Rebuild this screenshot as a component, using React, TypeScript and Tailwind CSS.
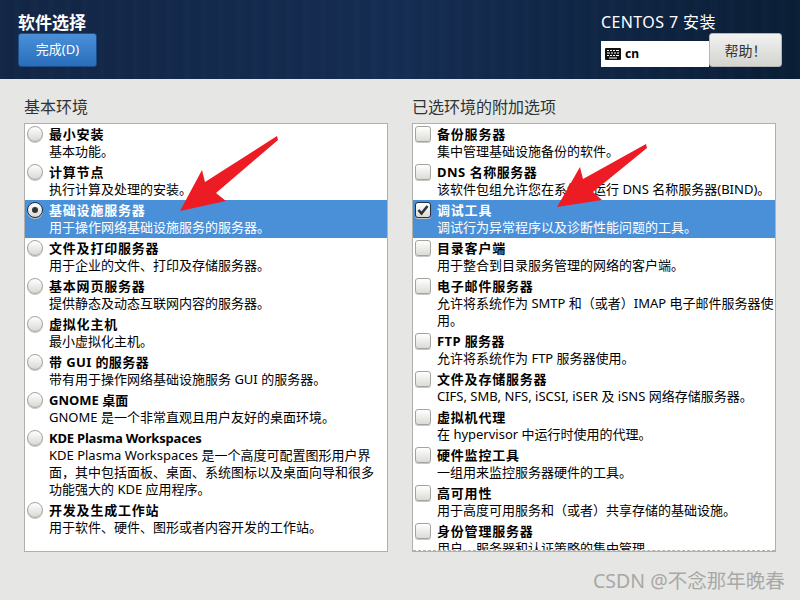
import React from 'react';

type Row = { title: string; desc: string; selected?: boolean; checked?: boolean; spacing?: string };

const envs: Row[] = [
  { title: '最小安装', desc: '基本功能。' },
  { title: '计算节点', desc: '执行计算及处理的安装。' },
  { title: '基础设施服务器', desc: '用于操作网络基础设施服务的服务器。', selected: true, checked: true },
  { title: '文件及打印服务器', desc: '用于企业的文件、打印及存储服务器。' },
  { title: '基本网页服务器', desc: '提供静态及动态互联网内容的服务器。' },
  { title: '虚拟化主机', desc: '最小虚拟化主机。' },
  { title: '带 GUI 的服务器', desc: '带有用于操作网络基础设施服务 GUI 的服务器。', spacing: 'tracking-[0.4px]' },
  { title: 'GNOME 桌面', desc: 'GNOME 是一个非常直观且用户友好的桌面环境。', spacing: 'tracking-normal' },
  {
    title: 'KDE Plasma Workspaces',
    desc: 'KDE Plasma Workspaces 是一个高度可配置图形用户界面，其中包括面板、桌面、系统图标以及桌面向导和很多功能强大的 KDE 应用程序。',
    spacing: 'tracking-[-0.2px]',
  },
  { title: '开发及生成工作站', desc: '用于软件、硬件、图形或者内容开发的工作站。' },
];

const addons: Row[] = [
  { title: '备份服务器', desc: '集中管理基础设施备份的软件。' },
  { title: 'DNS 名称服务器', desc: '该软件包组允许您在系统上运行 DNS 名称服务器(BIND)。', spacing: 'tracking-[0.5px]' },
  { title: '调试工具', desc: '调试行为异常程序以及诊断性能问题的工具。', selected: true, checked: true },
  { title: '目录客户端', desc: '用于整合到目录服务管理的网络的客户端。' },
  { title: '电子邮件服务器', desc: '允许将系统作为 SMTP 和（或者）IMAP 电子邮件服务器使用。' },
  { title: 'FTP 服务器', desc: '允许将系统作为 FTP 服务器使用。', spacing: 'tracking-[0.4px]' },
  { title: '文件及存储服务器', desc: 'CIFS, SMB, NFS, iSCSI, iSER 及 iSNS 网络存储服务器。' },
  { title: '虚拟机代理', desc: '在 hypervisor 中运行时使用的代理。' },
  { title: '硬件监控工具', desc: '一组用来监控服务器硬件的工具。' },
  { title: '高可用性', desc: '用于高度可用服务和（或者）共享存储的基础设施。' },
  { title: '身份管理服务器', desc: '用户、服务器和认证策略的集中管理。' },
];

function Radio({ checked }: { checked?: boolean }) {
  return (
    <span
      className={`w-[16px] h-[16px] rounded-full border bg-gradient-to-b from-[#ffffff] to-[#d8d8d4] flex items-center justify-center shrink-0 shadow-[0_1px_0_#c8c8c4] ${
        checked ? 'border-[#20303f]' : 'border-[#a3a39f]'
      }`}
    >
      {checked && <span className="w-[6px] h-[6px] rounded-full bg-[#2e3436]" />}
    </span>
  );
}

function Check({ checked }: { checked?: boolean }) {
  return (
    <span
      className={`w-[16px] h-[16px] rounded-[3px] border bg-gradient-to-b from-[#ffffff] to-[#dbdbd7] flex items-center justify-center shrink-0 shadow-[0_1px_0_#c8c8c4] ${
        checked ? 'border-[#20303f]' : 'border-[#a3a39f]'
      }`}
    >
      {checked && (
        <svg width="12" height="12" viewBox="0 0 12 12">
          <path d="M1.5 6 L4.5 9.5 L10.5 2" fill="none" stroke="#2e3436" strokeWidth="2.6" />
        </svg>
      )}
    </span>
  );
}

function ListRow({ row, radio }: { row: Row; radio?: boolean }) {
  return (
    <div className={`flex gap-[6px] py-[2px] pl-[2px] pr-[1px] ${row.selected ? 'bg-[#4a90d9] text-white' : 'text-black'}`}>
      {radio ? <Radio checked={row.checked} /> : <Check checked={row.checked} />}
      <div className="min-w-0 flex-1 text-[13px] leading-[17px]">
        <div className={`font-bold ${row.spacing ?? 'tracking-[0.8px]'}`}>{row.title}</div>
        <div>{row.desc}</div>
      </div>
    </div>
  );
}

function Panel({ label, rows, radio, clipped }: { label: string; rows: Row[]; radio?: boolean; clipped?: boolean }) {
  return (
    <div className="w-[364px] flex flex-col">
      <h2 className="text-[16px] leading-[20px] text-[#2e3436] mb-[6px]">{label}</h2>
      <div className="relative h-[429px] bg-white border border-[#b0b0ac] overflow-hidden">
        {rows.map((r) => (
          <ListRow key={r.title} row={r} radio={radio} />
        ))}
        {clipped && (
          <div className="absolute left-0 right-0 bottom-0 h-[1px] border-b border-dashed border-[#b0b0ac] bg-white" />
        )}
      </div>
    </div>
  );
}

export default function App() {
  return (
    <div
      className="relative w-[800px] h-[600px] overflow-hidden bg-[#e6e6e4]"
      style={{ fontFamily: '"Noto Sans", "Noto Sans CJK SC", sans-serif' }}
    >
      <header className="h-[79px] flex justify-between px-[18px] pt-[12px] bg-[repeating-linear-gradient(90deg,rgba(255,255,255,0.012)_0px,rgba(255,255,255,0)_5px,rgba(0,0,0,0.025)_11px,rgba(255,255,255,0.01)_17px),linear-gradient(90deg,#122645,#152d53_50%,#0a1e36)]">
        <div className="flex flex-col">
          <h1 className="text-[17px] leading-[21px] font-bold text-white">软件选择</h1>
          <button className="w-[79px] h-[34px] rounded-[3px] border border-[#1c4f8a] bg-gradient-to-b from-[#4a90d9] to-[#2a6ebb] text-[13px] text-white">
            完成(D)
          </button>
        </div>
        <div className="flex flex-col w-[181px]">
          <div className="text-[16px] leading-[21px] text-white tracking-[0.4px]">CENTOS 7 安装</div>
          <div className="flex h-[34px]">
            <div className="w-[108px] h-[26px] mt-[8px] bg-white flex items-center pl-[4px] gap-[4px] text-[12px] font-bold text-black">
              <svg width="16" height="12" viewBox="0 0 16 12">
                <rect width="16" height="12" rx="1" fill="#111" />
                <path
                  d="M2 2.5h2M5 2.5h2M8 2.5h2M11 2.5h3M2 5h3M6 5h2M9 5h2M12 5h2M2 7.5h2M5 7.5h2M8 7.5h2M11 7.5h3M4 10h8"
                  stroke="#fff"
                  strokeWidth="1.2"
                />
              </svg>
              cn
            </div>
            <button className="w-[73px] h-[34px] rounded-[3px] border border-[#b5b5b1] bg-gradient-to-b from-[#f2f2f0] to-[#d3d3cf] text-[14px] text-[#2e3436]">
              帮助！
            </button>
          </div>
        </div>
      </header>

      <main className="flex gap-[24px] pl-[24px] pt-[18px]">
        <Panel label="基本环境" rows={envs} radio />
        <Panel label="已选环境的附加选项" rows={addons} clipped />
      </main>

      <svg className="absolute left-0 top-0 pointer-events-none" width="800" height="600">
        <polygon points="180,211 202,170 205,182 277,136 278,140 216,193 226,201" fill="#ed1c24" />
        <polygon points="557,207 580,167 583,179 646,144 647,148 593,192 602,200" fill="#ed1c24" />
      </svg>

      <div className="absolute left-[593px] top-[569px] text-[19.5px] leading-[24px] text-[#a8a8a6]">CSDN @不念那年晚春</div>
    </div>
  );
}
